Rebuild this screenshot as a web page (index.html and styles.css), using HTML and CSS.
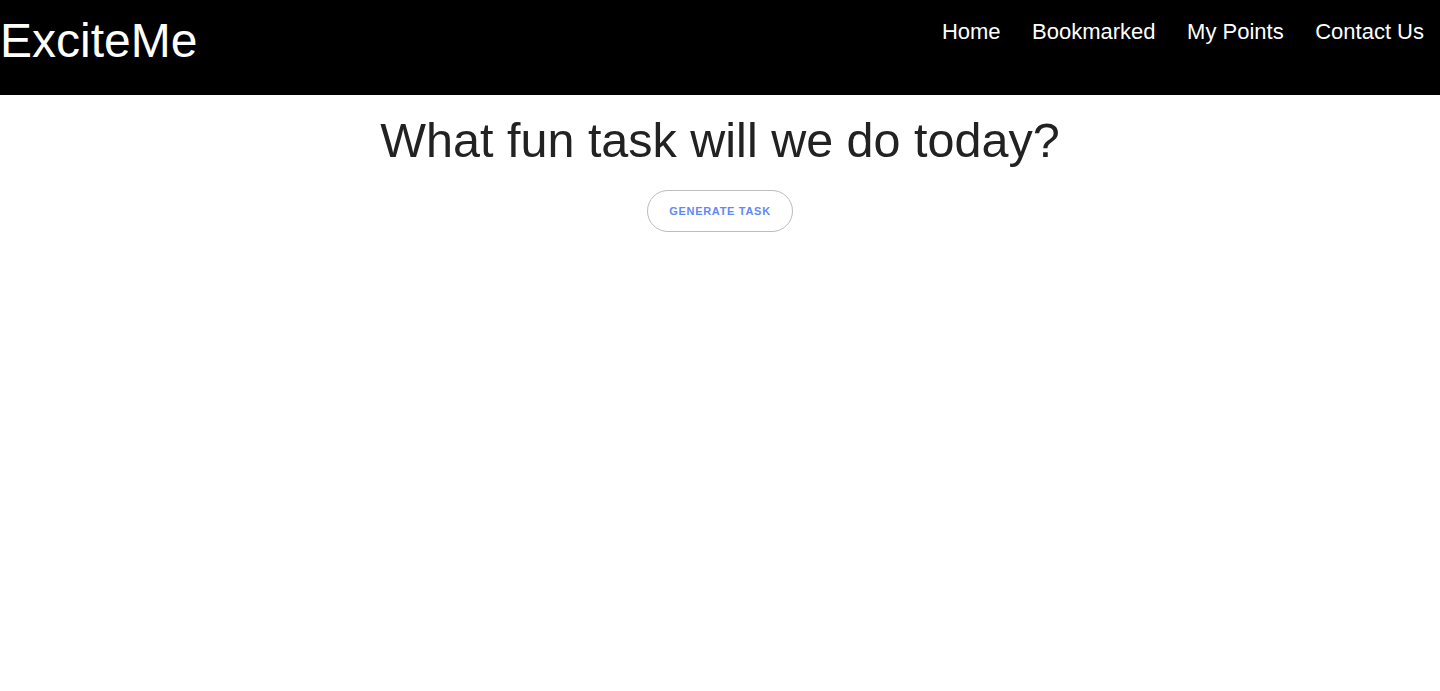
FILE: index.html
```html
<!DOCTYPE html>
<html lang="en">
<head>
<meta charset="utf-8">
<title>ExciteMe</title>
<link rel="stylesheet" href="styles.css">
</head>
<body>
<header class="topbar">
  <h1 class="logo">ExciteMe</h1>
  <nav class="nav">
    <a href="#" class="nav-link">Home</a>
    <a href="#" class="nav-link">Bookmarked</a>
    <a href="#" class="nav-link">My Points</a>
    <a href="#" class="nav-link">Contact Us</a>
  </nav>
</header>
<main class="main">
  <h2 class="title">What fun task will we do today?</h2>
  <button class="btn" type="button">Generate Task</button>
</main>
</body>
</html>
```
FILE: styles.css
```css
* { box-sizing: border-box; }
html, body { margin: 0; padding: 0; background: #fff; }
body { font-family: "Liberation Sans", Arial, Helvetica, sans-serif; }

.topbar {
  background: #000;
  height: 95px;
  display: flex;
  justify-content: space-between;
  align-items: flex-start;
  padding-right: 16px;
}
.logo {
  margin: 13px 0 0 0;
  font-size: 48px;
  font-weight: 400;
  color: #fff;
}
.nav {
  display: flex;
  gap: 31.5px;
  margin-top: 19px;
}
.nav-link {
  color: #fff;
  text-decoration: none;
  font-size: 22px;
}
.main {
  display: flex;
  flex-direction: column;
  align-items: center;
}
.title {
  margin: 17px 0 22px;
  font-size: 48.5px;
  font-weight: 400;
  color: #222;
}
.btn {
  width: 146px;
  height: 42px;
  border: 1px solid #bdbdbd;
  border-radius: 21px;
  background: #fff;
  color: #6189f5;
  font-family: "Liberation Sans", Arial, sans-serif;
  font-weight: 700;
  font-size: 11px;
  letter-spacing: 0.7px;
  text-transform: uppercase;
  padding: 0;
}
```
